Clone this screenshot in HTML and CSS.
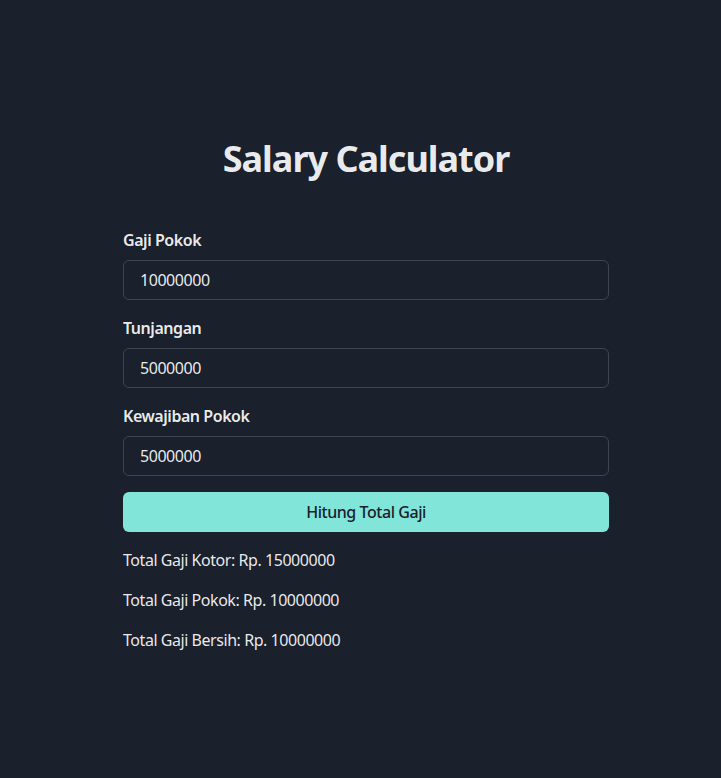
FILE: index.html
```html
<!DOCTYPE html>
<html lang="id">
<head>
<meta charset="utf-8">
<title>Salary Calculator</title>
<link rel="stylesheet" href="styles.css">
</head>
<body>
<div class="page">
  <main class="card">
    <h1 class="title">Salary Calculator</h1>
    <form class="form">
      <div class="field">
        <label class="label" for="gaji">Gaji Pokok</label>
        <input class="input" id="gaji" type="text" value="10000000">
      </div>
      <div class="field">
        <label class="label" for="tunj">Tunjangan</label>
        <input class="input" id="tunj" type="text" value="5000000">
      </div>
      <div class="field">
        <label class="label" for="kew">Kewajiban Pokok</label>
        <input class="input" id="kew" type="text" value="5000000">
      </div>
      <button class="button" type="button">Hitung Total Gaji</button>
    </form>
    <div class="results">
      <p class="result">Total Gaji Kotor: Rp. 15000000</p>
      <p class="result">Total Gaji Pokok: Rp. 10000000</p>
      <p class="result">Total Gaji Bersih: Rp. 10000000</p>
    </div>
  </main>
</div>
</body>
</html>
```

FILE: styles.css
```css
html, body {
  margin: 0;
  padding: 0;
  background: #1a202c;
  color: rgba(255, 255, 255, 0.92);
  font-family: "Noto Sans", "Open Sans", sans-serif;
  font-size: 16px;
  line-height: 1.5;
  letter-spacing: -0.45px;
}
.page {
  min-height: 778px;
  display: flex;
  justify-content: center;
  padding-left: 11px;
  box-sizing: border-box;
}
.card {
  width: 486px;
  padding-top: 137px;
  display: flex;
  flex-direction: column;
}
.title {
  margin: 0 0 48px;
  text-align: center;
  font-size: 36px;
  line-height: 1.2;
  font-weight: 700;
  letter-spacing: -1px;
  color: rgba(255, 255, 255, 0.92);
}
.form {
  display: flex;
  flex-direction: column;
  gap: 16px;
}
.field {
  display: flex;
  flex-direction: column;
}
.label {
  font-weight: 600;
  font-size: 16px;
  line-height: 24px;
  margin-bottom: 8px;
}
.input {
  height: 40px;
  box-sizing: border-box;
  padding: 0 16px;
  border: 1px solid rgba(255, 255, 255, 0.16);
  border-radius: 6px;
  background: transparent;
  color: rgba(255, 255, 255, 0.92);
  font-family: inherit;
  font-size: 16px;
  letter-spacing: -0.45px;
  outline: none;
}
.button {
  height: 40px;
  border: none;
  border-radius: 6px;
  background: #81e6d9;
  color: #1a202c;
  font-family: inherit;
  font-size: 16px;
  font-weight: 500;
  letter-spacing: -0.45px;
  cursor: pointer;
}
.results {
  margin-top: 16px;
  display: flex;
  flex-direction: column;
  gap: 16px;
}
.result {
  margin: 0;
  line-height: 24px;
}
```
